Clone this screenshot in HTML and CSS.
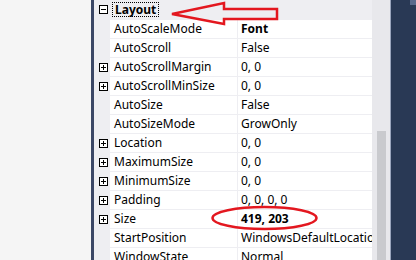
FILE: index.html
```html
<!DOCTYPE html>
<html lang="en">
<head>
    <meta charset="UTF-8">
    <title>Properties - Layout</title>
    <link rel="stylesheet" href="styles.css">
</head>
<body>
    <div class="side"></div>
    <div class="divider"></div>
    <div class="grid">
        <div class="category">
            <span class="toggle minus"></span>
            <span class="category-name">Layout</span>
        </div>
        <div class="row"><span class="gutter"></span><span class="name">AutoScaleMode</span><span class="value bold">Font</span></div>
        <div class="row"><span class="gutter"></span><span class="name">AutoScroll</span><span class="value">False</span></div>
        <div class="row"><span class="gutter"><span class="toggle plus"></span></span><span class="name">AutoScrollMargin</span><span class="value">0, 0</span></div>
        <div class="row"><span class="gutter"><span class="toggle plus"></span></span><span class="name">AutoScrollMinSize</span><span class="value">0, 0</span></div>
        <div class="row"><span class="gutter"></span><span class="name">AutoSize</span><span class="value">False</span></div>
        <div class="row"><span class="gutter"></span><span class="name">AutoSizeMode</span><span class="value">GrowOnly</span></div>
        <div class="row"><span class="gutter"><span class="toggle plus"></span></span><span class="name">Location</span><span class="value">0, 0</span></div>
        <div class="row"><span class="gutter"><span class="toggle plus"></span></span><span class="name">MaximumSize</span><span class="value">0, 0</span></div>
        <div class="row"><span class="gutter"><span class="toggle plus"></span></span><span class="name">MinimumSize</span><span class="value">0, 0</span></div>
        <div class="row"><span class="gutter"><span class="toggle plus"></span></span><span class="name">Padding</span><span class="value">0, 0, 0, 0</span></div>
        <div class="row"><span class="gutter"><span class="toggle plus"></span></span><span class="name">Size</span><span class="value bold">419, 203</span></div>
        <div class="row"><span class="gutter"></span><span class="name">StartPosition</span><span class="value">WindowsDefaultLocation</span></div>
        <div class="row"><span class="gutter"></span><span class="name">WindowState</span><span class="value">Normal</span></div>
    </div>
    <div class="scrollbar"><div class="thumb"></div></div>
    <div class="edge"></div>
    <div class="dark"><span class="tab-mark"></span></div>

    <!-- red markup drawn over the screenshot -->
    <svg class="markup" width="416" height="260" viewBox="0 0 416 260">
        <polygon points="172,14 224,3 224,9 277,9 277,19 224,19 224,24" fill="none" stroke="#e3171f" stroke-width="2.5" stroke-linejoin="miter"/>
        <ellipse cx="264.5" cy="218" rx="52" ry="11" fill="none" stroke="#e3171f" stroke-width="2.5"/>
    </svg>
</body>
</html>
```

FILE: styles.css
```css
body {
    margin: 0;
    width: 416px;
    height: 260px;
    overflow: hidden;
    display: flex;
    font-family: 'Noto Sans', 'Open Sans', sans-serif;
    font-size: 12px;
    color: #000;
    background-color: #f5f5f5;
    position: relative;
}
.side {
    width: 91px;
    background-color: #f5f5f5;
}
.divider {
    width: 3px;
    background-color: #3b4766;
}
.grid {
    width: 278px;
    background-color: #eeeef2;
    display: flex;
    flex-direction: column;
}
.category {
    height: 19px;
    display: flex;
    align-items: center;
    flex-shrink: 0;
}
.category .toggle {
    margin-left: 5px;
}
.category-name {
    margin-left: 5px;
    padding: 0 2px;
    font-weight: bold;
    line-height: 13px;
    outline: 1px dotted #000;
}
.row {
    display: flex;
    height: 18px;
    flex-shrink: 0;
    border-top: 1px solid #eeeef2;
    line-height: 18px;
}
.gutter {
    width: 16px;
    display: flex;
    align-items: center;
    padding-left: 5px;
    box-sizing: border-box;
}
.name {
    width: 128px;
    padding-left: 4px;
    box-sizing: border-box;
    background-color: #fff;
    border-right: 1px solid #eeeef2;
    white-space: nowrap;
    overflow: hidden;
}
.value {
    flex: 1;
    padding-left: 3px;
    background-color: #fff;
    white-space: nowrap;
    overflow: hidden;
}
.bold {
    font-weight: bold;
}
.toggle {
    width: 9px;
    height: 9px;
    box-sizing: border-box;
    border: 1px solid #000;
    position: relative;
    background-color: #fff;
}
.toggle::before,
.toggle::after {
    content: '';
    position: absolute;
    background-color: #000;
}
.toggle::before {
    left: 1px;
    top: 3px;
    width: 5px;
    height: 1px;
}
.plus::after {
    left: 3px;
    top: 1px;
    width: 1px;
    height: 5px;
}
.scrollbar {
    width: 18px;
    background-color: #e8e8ec;
    display: flex;
    flex-direction: column;
    align-items: center;
}
.thumb {
    width: 9px;
    margin-top: 131px;
    flex: 1;
    background-color: #c9cace;
}
.edge {
    width: 1px;
    background-color: #9aa5bd;
}
.dark {
    flex: 1;
    background-color: #293955;
    position: relative;
}
.tab-mark {
    position: absolute;
    top: 0;
    right: 0;
    width: 6px;
    height: 5px;
    background-color: #5a6a8c;
}
.markup {
    position: absolute;
    left: 0;
    top: 0;
}
```
